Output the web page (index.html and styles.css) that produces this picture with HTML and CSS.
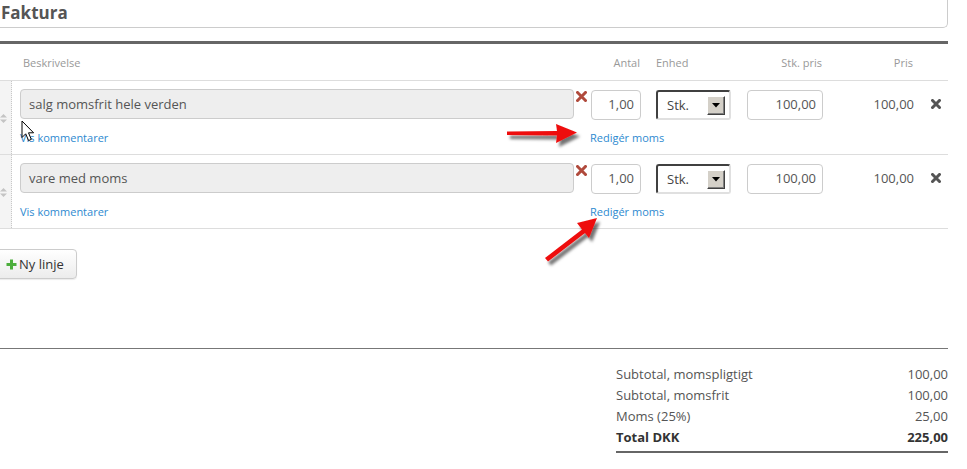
FILE: index.html
```html
<!DOCTYPE html>
<html>
<head>
<meta charset="utf-8">
<link rel="stylesheet" href="styles.css">
</head>
<body>
<div class="page">
  <div class="title-box"><h1>Faktura</h1></div>
  <div class="thick-line"></div>

  <div class="head">
    <div class="h-desc">Beskrivelse</div>
    <div class="h-antal">Antal</div>
    <div class="h-enhed">Enhed</div>
    <div class="h-stk">Stk. pris</div>
    <div class="h-pris">Pris</div>
  </div>

  <div class="row">
    <div class="handle"><svg width="7" height="9" viewBox="0 0 7 9"><path d="M0 3.5 L3.5 0 L7 3.5Z M0 5.5 L3.5 9 L7 5.5Z" fill="#c4c4c4"/></svg></div>
    <div class="cells">
      <div class="line1">
        <div class="desc">salg momsfrit hele verden</div>
        <div class="del-red"><svg width="11" height="11" viewBox="0 0 11 11"><path d="M1.5 1.5 L9.5 9.5 M9.5 1.5 L1.5 9.5" stroke="#b04a3c" stroke-width="3" stroke-linecap="square"/></svg></div>
        <div class="inp antal">1,00</div>
        <div class="select"><span>Stk.</span><span class="sel-btn"><svg width="8" height="5" viewBox="0 0 8 5"><path d="M0 0 H8 L4 4.5Z" fill="#000"/></svg></span></div>
        <div class="inp stk">100,00</div>
        <div class="pris">100,00</div>
        <div class="del-grey"><svg width="10" height="10" viewBox="0 0 10 10"><path d="M1.5 1.5 L8.5 8.5 M8.5 1.5 L1.5 8.5" stroke="#555" stroke-width="3" stroke-linecap="square"/></svg></div>
      </div>
      <div class="line2">
        <a class="link comments">Vis kommentarer</a>
        <a class="link">Redigér moms</a>
      </div>
    </div>
  </div>

  <div class="row">
    <div class="handle"><svg width="7" height="9" viewBox="0 0 7 9"><path d="M0 3.5 L3.5 0 L7 3.5Z M0 5.5 L3.5 9 L7 5.5Z" fill="#c4c4c4"/></svg></div>
    <div class="cells">
      <div class="line1">
        <div class="desc">vare med moms</div>
        <div class="del-red"><svg width="11" height="11" viewBox="0 0 11 11"><path d="M1.5 1.5 L9.5 9.5 M9.5 1.5 L1.5 9.5" stroke="#b04a3c" stroke-width="3" stroke-linecap="square"/></svg></div>
        <div class="inp antal">1,00</div>
        <div class="select"><span>Stk.</span><span class="sel-btn"><svg width="8" height="5" viewBox="0 0 8 5"><path d="M0 0 H8 L4 4.5Z" fill="#000"/></svg></span></div>
        <div class="inp stk">100,00</div>
        <div class="pris">100,00</div>
        <div class="del-grey"><svg width="10" height="10" viewBox="0 0 10 10"><path d="M1.5 1.5 L8.5 8.5 M8.5 1.5 L1.5 8.5" stroke="#555" stroke-width="3" stroke-linecap="square"/></svg></div>
      </div>
      <div class="line2">
        <a class="link comments">Vis kommentarer</a>
        <a class="link">Redigér moms</a>
      </div>
    </div>
  </div>

  <div class="btn-wrap">
    <button class="btn"><svg width="11" height="11" viewBox="0 0 11 11"><path d="M5.5 0.5 V10.5 M0.5 5.5 H10.5" stroke="#4cae3c" stroke-width="3"/></svg>Ny linje</button>
  </div>

  <div class="sep"></div>

  <div class="totals">
    <div class="t-row"><span>Subtotal, momspligtigt</span><span>100,00</span></div>
    <div class="t-row"><span>Subtotal, momsfrit</span><span>100,00</span></div>
    <div class="t-row"><span>Moms (25%)</span><span>25,00</span></div>
    <div class="t-row total"><span>Total DKK</span><span>225,00</span></div>
  </div>

  <svg class="overlay" width="967" height="469" viewBox="0 0 967 469">
    <defs>
      <filter id="sh" x="-30%" y="-30%" width="160%" height="160%">
        <feDropShadow dx="3" dy="4" stdDeviation="1.8" flood-color="#000" flood-opacity="0.55"/>
      </filter>
    </defs>
    <g filter="url(#sh)" fill="#ee1111">
      <path d="M507 136.5 L557 136 L556 129 L577 137.5 L556 148 L557 140.5 L507 140Z"/>
      <path d="M545 263 L582 234.5 L577 228 L597 223 L589 243 L585 238 L548 266.5Z"/>
    </g>
    <path d="M22 126 L22 142.5 L25.7 138.8 L28.6 145.6 L31.3 144.4 L28.5 137.8 L33.6 137.8Z" fill="#fff" stroke="#000" stroke-width="1" stroke-linejoin="miter"/>
  </svg>
</div>
</body>
</html>
```

FILE: styles.css
```css
* { box-sizing: border-box; }

html, body {
  margin: 0;
  padding: 0;
  background: #fff;
}

body {
  font-family: "Open Sans", "DejaVu Sans", sans-serif;
  color: #555;
  width: 967px;
  height: 469px;
  overflow: hidden;
}

.page {
  position: relative;
  width: 948px;
}

.title-box {
  margin: -5px 0 0 -10px;
  padding: 8px 0 4px 10px;
  border: 1px solid #ccc;
  border-top: none;
  border-radius: 0 0 5px 5px;
  width: 958px;
}

.title-box h1 {
  margin: 0;
  font-size: 17px;
  line-height: 20px;
  font-weight: 700;
  color: #555;
}

.thick-line {
  margin-top: 13px;
  height: 3px;
  background: #666;
}

.head {
  display: flex;
  align-items: center;
  height: 37px;
  border-bottom: 1px solid #ddd;
  font-size: 11px;
  color: #999;
}

.h-desc { margin-left: 23px; width: 568px; }
.h-antal { width: 49px; text-align: right; }
.h-enhed { margin-left: 16px; width: 91px; }
.h-stk { width: 75px; text-align: right; }
.h-pris { width: 91px; text-align: right; }

.row {
  display: flex;
  height: 74px;
  border-bottom: 1px solid #ddd;
}

.handle {
  width: 12px;
  background: #f4f4f4;
  border-right: 1px dotted #c8c8c8;
  display: flex;
  align-items: center;
  padding-top: 1px;
}

.cells {
  flex: 1;
  padding: 8px 0 0 8px;
}

.line1 {
  display: flex;
  align-items: flex-start;
  height: 30px;
}

.desc {
  width: 554px;
  height: 30px;
  background: #eee;
  border: 1px solid #ccc;
  border-radius: 4px;
  font-size: 13px;
  line-height: 28px;
  padding-left: 8px;
  color: #555;
}

.del-red {
  width: 17px;
  padding: 2px 0 0 2px;
  display: flex;
}

.inp {
  height: 30px;
  border: 1px solid #ccc;
  border-radius: 4px;
  background: #fff;
  font-size: 13px;
  line-height: 27px;
  text-align: right;
  padding-right: 6px;
  color: #555;
  margin-top: 1px;
}

.antal { width: 50px; }
.stk { width: 76px; margin-left: 16px; }

.select {
  margin-left: 15px;
  width: 75px;
  height: 30px;
  margin-top: 1px;
  border-style: solid;
  border-width: 2px;
  border-color: #404040 #e0e0e0 #e0e0e0 #404040;
  border-radius: 3px;
  display: flex;
  align-items: center;
  justify-content: space-between;
  padding: 0 4px 0 9px;
  font-size: 13px;
  color: #444;
  background: #fff;
}

.sel-btn {
  width: 18px;
  height: 19px;
  background: #d4d0c8;
  border-style: solid;
  border-width: 1px;
  border-color: #fff #404040 #404040 #fff;
  box-shadow: inset -1px -1px 0 #808080;
  display: flex;
  align-items: center;
  justify-content: center;
}

.pris {
  width: 91px;
  text-align: right;
  font-size: 13px;
  line-height: 28px;
  color: #555;
  margin-top: 1px;
}

.del-grey {
  margin-left: 17px;
  margin-top: 10px;
  display: flex;
}

.line2 {
  display: flex;
  margin-top: 11px;
  font-size: 11px;
  line-height: 15px;
}

.link {
  color: #2e8ad0;
  text-decoration: none;
}

.comments {
  width: 570px;
}

.btn-wrap {
  margin-top: 20px;
  height: 30px;
}

.btn {
  margin-left: -10px;
  height: 30px;
  padding: 0 12px 0 15px;
  border: 1px solid #ccc;
  border-radius: 4px;
  background: linear-gradient(#ffffff, #ececec);
  box-shadow: 0 1px 1px rgba(0,0,0,0.08);
  font-family: "Open Sans", "DejaVu Sans", sans-serif;
  font-size: 13px;
  color: #333;
  display: flex;
  align-items: center;
  gap: 2px;
}

.sep {
  margin-top: 69px;
  height: 1px;
  background: #777;
}

.totals {
  margin: 15px 0 0 616px;
  width: 332px;
  border-bottom: 2px solid #666;
  padding-bottom: 3px;
}

.t-row {
  display: flex;
  justify-content: space-between;
  font-size: 13px;
  line-height: 21px;
  color: #555;
}

.t-row.total {
  font-weight: 700;
  color: #333;
}

.overlay {
  position: absolute;
  left: 0;
  top: 0;
  pointer-events: none;
}
```
